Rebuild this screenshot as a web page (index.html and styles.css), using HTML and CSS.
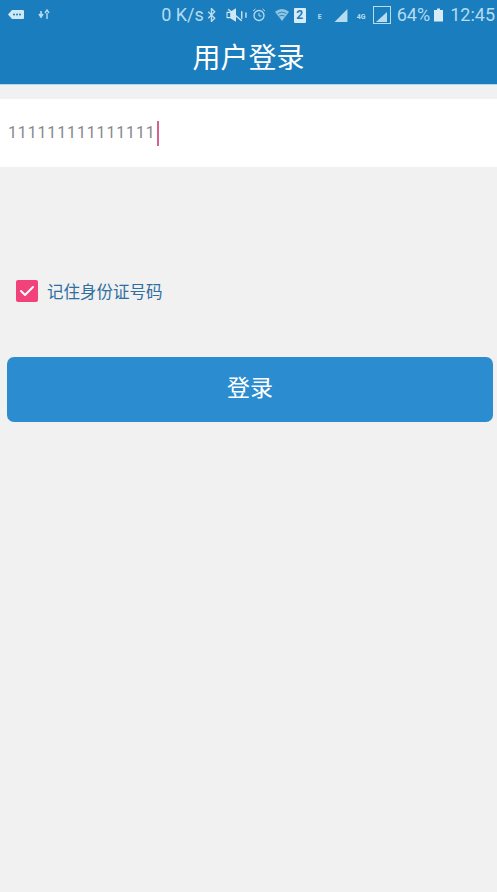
FILE: index.html
```html
<!DOCTYPE html>
<html lang="zh">
<head>
<meta charset="utf-8">
<title>用户登录</title>
<link rel="stylesheet" href="styles.css">
</head>
<body>
<header class="appbar">
  <div class="status">
    <div class="status-left">
      <svg class="ic" width="18" height="14" viewBox="0 0 18 14"><path d="M5 2h11a1 1 0 0 1 1 1v7a1 1 0 0 1-1 1H5L1 6.500z" fill="#cfe8f5"/><circle cx="7" cy="6.500" r="1" fill="#1a7dbd"/><circle cx="10" cy="6.500" r="1" fill="#1a7dbd"/><circle cx="13" cy="6.500" r="1" fill="#1a7dbd"/></svg>
      <svg class="ic" width="13" height="12" viewBox="0 0 13 12"><path d="M3 2v5M1 5l2 3 2-3" stroke="#b5dcf0" stroke-width="1.600" fill="none"/><path d="M9 10V4M7 4l2-3 2 3" stroke="#b5dcf0" stroke-width="1.400" fill="none"/></svg>
    </div>
    <div class="status-right">
      <span class="speed">0 K/s</span>
      <svg class="ic bt" width="10" height="14" viewBox="0 0 9 13"><path d="M1 3.500l6 6-3 3V.500l3 3-6 6" stroke="#b5dcf0" stroke-width="1.300" fill="none"/></svg>
      <svg class="ic mute" width="21" height="14" viewBox="0 0 20 13"><path d="M1 4h3l5-3v11L4 9H1z" fill="none" stroke="#cfe8f5" stroke-width="1"/><path d="M4 4l5-3v11l-5-3z" fill="#cfe8f5"/><path d="M2 1l13 11" stroke="#cfe8f5" stroke-width="1.400"/><path d="M15 3v7M19 4v5" stroke="#cfe8f5" stroke-width="1.300"/></svg>
      <svg class="ic alarm" width="14" height="14" viewBox="0 0 14 14"><circle cx="7" cy="7.500" r="5" stroke="#b5dcf0" stroke-width="1.300" fill="none"/><path d="M7 5v3h2.500M1 3l2.500-2M13 3l-2.500-2" stroke="#b5dcf0" stroke-width="1" fill="none"/></svg>
      <svg class="ic wifi" width="14" height="14" viewBox="0 0 13 13"><path d="M0 3.500Q6.500-1.500 13 3.500L6.500 12z" fill="#8fc6e4"/><path d="M2.500 5Q6.500 2.500 10.500 5M4 7.500q2.500-1.500 5 0" stroke="#1a7dbd" stroke-width=".8" fill="none"/></svg>
      <span class="sim">2</span>
      <span class="tiny e">E</span>
      <svg class="ic signal" width="15" height="14" viewBox="0 0 13 13"><path d="M0 13L12 1v12z" fill="#b5dcf0"/></svg>
      <span class="tiny g">4G</span>
      <span class="sigbox"><svg width="13" height="13" viewBox="0 0 13 13"><path d="M1 12L12 2v10z" fill="#b5dcf0"/></svg></span>
      <span class="pct">64%</span>
      <svg class="ic" width="9" height="14" viewBox="0 0 9 13"><path d="M3 0h3v1.500h3V13H0V1.500h3z" fill="#d8ecf7"/></svg>
      <span class="clock">12:45</span>
    </div>
  </div>
  <h1 class="title">用户登录</h1>
</header>
<main class="content">
  <div class="field">
    <span class="value">111111111111111</span><span class="caret"></span>
  </div>
  <label class="remember">
    <span class="check"><svg width="22" height="22" viewBox="0 0 22 22"><path d="M5 11l4 4 8-8" stroke="#fff" stroke-width="2" fill="none" stroke-linecap="round" stroke-linejoin="round"/></svg></span>
    <span class="remember-text">记住身份证号码</span>
  </label>
  <button class="login" type="button">登录</button>
</main>
</body>
</html>
```
FILE: styles.css
```css
* { box-sizing: border-box; }
html, body { margin: 0; height: 100%; }
body {
  width: 497px;
  height: 892px;
  overflow: hidden;
  background: #f1f1f2;
  font-family: Roboto, "Noto Sans CJK SC", sans-serif;
  display: flex;
  flex-direction: column;
}
.appbar {
  height: 85px;
  background: #1a7dbd;
  border-bottom: 1px solid #a9dcf5;
  flex: none;
}
.status {
  height: 32px;
  display: flex;
  justify-content: space-between;
  align-items: center;
  padding: 0 2px 2px 7px;
}
.status-left, .status-right { display: flex; align-items: center; }
.status-left { gap: 13px; }
.ic { display: block; flex: none; }
.speed, .pct, .clock { color: #b5dcf0; font-size: 18px; line-height: 20px; white-space: nowrap; }
.bt { margin-left: 3px; }
.mute { margin-left: 9px; }
.alarm { margin-left: 5px; }
.wifi { margin-left: 9px; }
.sim {
  width: 12px; height: 15px; margin-left: 5px;
  background: #d8ecf7; color: #1a7dbd;
  font-size: 12px; font-weight: 700; line-height: 15px; text-align: center;
  border-radius: 1px;
}
.tiny { color: #b5dcf0; font-size: 7px; font-weight: 700; line-height: 8px; align-self: flex-start; margin-top: 8px; }
.e { width: 4px; margin-left: 12px; }
.signal { margin-left: 12px; }
.g { margin-left: 8px; width: 13px; }
.sigbox {
  width: 18px; height: 18px; margin-left: 3px;
  border: 1px solid #b5dcf0; display: flex; align-items: flex-end; justify-content: center;
}
.pct { margin-left: 6px; }
.pct + .ic { margin-left: 4px; }
.clock { margin-left: 7px; }
.title {
  margin: 0;
  height: 52px;
  line-height: 53px;
  text-align: center;
  color: #fff;
  font-size: 28px;
  font-weight: 400;
}
.content {
  flex: 1;
  display: flex;
  flex-direction: column;
  padding-top: 14px;
}
.field {
  height: 68px;
  background: #fff;
  display: flex;
  align-items: center;
  padding-left: 8px;
}
.value { color: #86898c; font-size: 16px; letter-spacing: .85px; line-height: 20px; }
.caret { width: 2px; height: 25px; margin-left: 1px; background: #d4618f; }
.remember {
  display: flex;
  align-items: center;
  gap: 9px;
  margin: 113px 0 0 16px;
  height: 22px;
}
.check { width: 22px; height: 22px; border-radius: 2px; background: #f2427c; display: block; }
.check svg { display: block; }
.remember-text { color: #2f6f9f; font-size: 16.500px; line-height: 24px; padding-top: 3px; }
.login {
  display: block;
  margin: 55px 4px 0 7px;
  height: 65px;
  border: 0;
  border-radius: 7px;
  background: #2b8cd0;
  color: #fff;
  font-family: inherit;
  font-size: 23px;
  line-height: 60px;
  padding: 0 0 1px;
}
```
